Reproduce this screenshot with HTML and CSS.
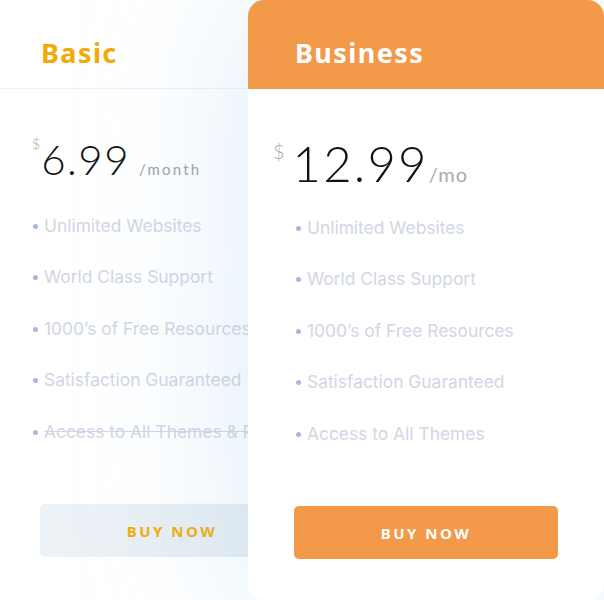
FILE: index.html
```html
<!DOCTYPE html>
<html lang="en">
<head>
<meta charset="utf-8">
<title>Pricing</title>
<link rel="stylesheet" href="styles.css">
</head>
<body>
<div class="plans">
  <section class="card card-basic">
    <header class="card-head"><h2 class="title">Basic</h2></header>
    <div class="price"><span class="cur">$</span><span class="amount">6.99</span><span class="per">/month</span></div>
    <ul class="features">
      <li>Unlimited Websites</li>
      <li>World Class Support</li>
      <li>1000’s of Free Resources</li>
      <li>Satisfaction Guaranteed</li>
      <li class="off">Access to All Themes &amp; Plugins</li>
    </ul>
    <div class="action"><a class="btn">BUY NOW</a></div>
  </section>
  <section class="card card-business">
    <header class="card-head"><h2 class="title">Business</h2></header>
    <div class="price"><span class="cur">$</span><span class="amount">12.99</span><span class="per">/mo</span></div>
    <ul class="features">
      <li>Unlimited Websites</li>
      <li>World Class Support</li>
      <li>1000’s of Free Resources</li>
      <li>Satisfaction Guaranteed</li>
      <li>Access to All Themes</li>
    </ul>
    <div class="action"><a class="btn">BUY NOW</a></div>
  </section>
</div>
</body>
</html>
```

FILE: styles.css
```css
html, body {
  margin: 0;
  padding: 0;
  background: #ffffff;
  overflow: hidden;
}
body {
  width: 604px;
  height: 600px;
  font-family: "Noto Sans", "Liberation Sans", sans-serif;
}
.plans {
  display: flex;
  align-items: flex-start;
  height: 600px;
}
.card {
  display: flex;
  flex-direction: column;
  box-sizing: border-box;
  flex: 0 0 auto;
}
.card-basic {
  width: 344px;
  height: 600px;
}
.card-business {
  width: 356px;
  height: 600px;
  margin-left: -96px;
  position: relative;
  z-index: 1;
  background: #ffffff;
  border-radius: 16px;
  overflow: hidden;
  box-shadow: 0 0 160px rgba(150, 200, 238, 0.36);
}
.card-head {
  height: 89px;
  box-sizing: border-box;
  display: flex;
  align-items: flex-start;
}
.card-basic .card-head {
  border-bottom: 1px solid #eef1f5;
  padding-left: 41px;
}
.card-business .card-head {
  background: #f2994a;
  padding-left: 47px;
}
.title {
  margin: 39px 0 0;
  font-size: 27px;
  line-height: 28px;
  font-weight: 700;
  letter-spacing: 1.4px;
}
.card-basic .title { color: #f4aa06; }
.card-business .title { color: #ffffff; }

.price {
  display: flex;
  align-items: baseline;
  font-family: "Lato", sans-serif;
  height: 100px;
  box-sizing: border-box;
}
.card-basic .price { padding: 48px 0 0 32px; }
.card-business .price { padding: 50px 0 0 25px; }
.cur {
  color: #a8a8a8;
  font-weight: 300;
  align-self: flex-start;
}
.card-basic .cur { font-size: 14px; margin-top: -2px; margin-right: 1px; }
.card-business .cur { font-size: 20px; margin-top: 0; margin-right: 8px; }
.amount {
  color: #111111;
  font-weight: 300;
  letter-spacing: 1.5px;
}
.card-basic .amount { font-size: 42px; line-height: 44px; }
.card-business .amount { font-size: 49px; line-height: 48px; letter-spacing: 2.2px; }
.per {
  color: #a0a0a0;
  font-weight: 400;
}
.card-basic .per { font-size: 15px; letter-spacing: 2.2px; margin-left: 9px; }
.card-business .per { font-size: 20px; letter-spacing: 1px; margin-left: 0; color: #aaaaaa; }

.features {
  list-style: none;
  margin: 0;
  padding: 0;
  font-family: "Inter", sans-serif;
  font-size: 17.4px;
  color: #d1d6e4;
}
.card-basic .features { padding: 26px 0 0 33px; }
.card-business .features { padding: 28px 0 0 48px; }
.features li {
  height: 51.4px;
  line-height: 22px;
  display: flex;
  align-items: flex-start;
  white-space: nowrap;
}
.features li::before {
  content: "";
  width: 5px;
  height: 5px;
  border-radius: 50%;
  background: #a8b6e6;
  margin: 9px 6px 0 0;
  flex: 0 0 auto;
}
.features li.off {
  text-decoration: line-through;
}

.action {
  margin-top: auto;
}
.card-basic .action { padding-left: 40px; padding-bottom: 43px; }
.card-business .action { padding-left: 46px; padding-bottom: 41px; }
.btn {
  display: flex;
  align-items: center;
  justify-content: center;
  width: 264px;
  height: 53px;
  border-radius: 5px;
  font-family: "Noto Sans", sans-serif;
  font-weight: 700;
  font-size: 15px;
  letter-spacing: 2.5px;
}
.card-basic .btn {
  background: linear-gradient(90deg, #edf2f6 0%, #e4ecf2 100%);
  color: #f4aa06;
}
.card-business .btn {
  background: #f2994a;
  color: #ffffff;
}
```
